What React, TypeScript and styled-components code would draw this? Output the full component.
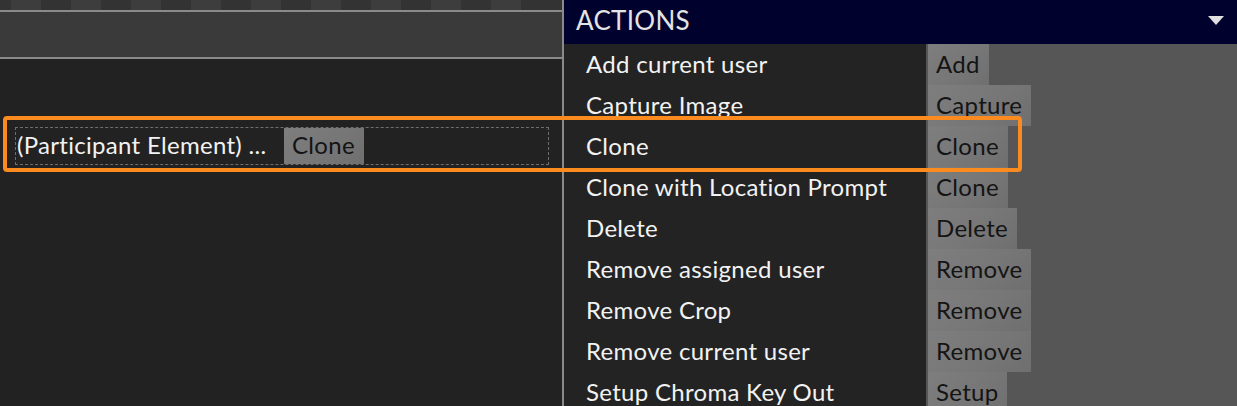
import React from "react";
import styled, { createGlobalStyle } from "styled-components";

const GlobalStyle = createGlobalStyle`
  html, body {
    margin: 0;
    padding: 0;
    background: #222;
    overflow: hidden;
  }
  body {
    font-family: Lato, "Noto Sans", "DejaVu Sans", sans-serif;
  }
`;

const Page = styled.div`
  position: relative;
  display: flex;
  width: 1237px;
  height: 406px;
  overflow: hidden;
`;

const LeftPane = styled.div`
  display: flex;
  flex-direction: column;
  width: 562px;
  flex-shrink: 0;
  background: #222;
  border-right: 2px solid #8a8a8a;
`;

const TopStrip = styled.div`
  flex-shrink: 0;
  height: 10px;
  background: repeating-linear-gradient(
    90deg,
    #333 0px,
    #333 30px,
    #3d3d3d 30px,
    #3d3d3d 60px
  );
  background-position: -19px 0;
  border-bottom: 2px solid #8a8a8a;
`;

const Toolbar = styled.div`
  flex-shrink: 0;
  height: 45px;
  background: #3a3a3a;
  border-bottom: 2px solid #8a8a8a;
`;

const Canvas = styled.div`
  flex: 1;
  padding: 68px 0 0 15px;
`;

const ParticipantElement = styled.div`
  display: flex;
  align-items: center;
  width: 531px;
  height: 36px;
  border: 1px dashed #6e6e6e;
  padding-left: 1px;
`;

const ElementName = styled.span`
  color: #f2f2f2;
  font-size: 24px;
  letter-spacing: 0.3px;
  width: 267px;
  padding-bottom: 3px;
  white-space: nowrap;
`;

const RightPane = styled.div`
  display: flex;
  flex-direction: column;
  flex: 1;
`;

const Header = styled.div`
  display: flex;
  flex-shrink: 0;
  align-items: center;
  justify-content: space-between;
  height: 44px;
  padding: 0 13px 0 12px;
  background: #01012e;
  color: #e4e4e4;
  font-size: 26px;
  letter-spacing: 0.3px;
  & > span {
    padding-bottom: 5px;
  }
  & > svg {
    margin-bottom: 3px;
  }
`;

const Row = styled.div`
  display: flex;
  flex-shrink: 0;
  height: 41px;
`;

const Label = styled.div`
  display: flex;
  align-items: center;
  width: 340px;
  padding: 0 0 3px 22px;
  background: #232323;
  color: #f2f2f2;
  font-size: 24px;
  letter-spacing: 0.3px;
  white-space: nowrap;
`;

const ButtonCell = styled.div`
  display: flex;
  flex: 1;
  padding-left: 2px;
  background: #565656;
`;

const ActionButton = styled.button<{ $small?: boolean }>`
  display: flex;
  align-items: center;
  height: ${(p) => (p.$small ? "36px" : "41px")};
  padding: 0 9px 3px 8px;
  margin: 0;
  border: none;
  border-radius: 0;
  background: linear-gradient(135deg, #7e7e7e 0%, #767676 60%, #6f6f6f 100%);
  color: #141414;
  font-family: inherit;
  font-size: 24px;
  letter-spacing: 0.3px;
  cursor: pointer;
`;

const Highlight = styled.div`
  position: absolute;
  left: 3px;
  top: 116px;
  width: 1011px;
  height: 48px;
  border: 4px solid #fb8a1f;
  border-radius: 4px;
  pointer-events: none;
`;

const actions: [string, string][] = [
  ["Add current user", "Add"],
  ["Capture Image", "Capture"],
  ["Clone", "Clone"],
  ["Clone with Location Prompt", "Clone"],
  ["Delete", "Delete"],
  ["Remove assigned user", "Remove"],
  ["Remove Crop", "Remove"],
  ["Remove current user", "Remove"],
  ["Setup Chroma Key Out", "Setup"],
];

const Caret = () => (
  <svg width="16" height="9" viewBox="0 0 16 9">
    <path d="M0 0 H16 L8 9 Z" fill="#e0e0e0" />
  </svg>
);

export default function App() {
  return (
    <Page>
      <GlobalStyle />
      <LeftPane>
        <TopStrip />
        <Toolbar />
        <Canvas>
          <ParticipantElement>
            <ElementName>(Participant Element) ...</ElementName>
            <ActionButton $small>Clone</ActionButton>
          </ParticipantElement>
        </Canvas>
      </LeftPane>
      <RightPane>
        <Header>
          <span>ACTIONS</span>
          <Caret />
        </Header>
        {actions.map(([label, button]) => (
          <Row key={label}>
            <Label>{label}</Label>
            <ButtonCell>
              <ActionButton>{button}</ActionButton>
            </ButtonCell>
          </Row>
        ))}
      </RightPane>
      <Highlight />
    </Page>
  );
}
